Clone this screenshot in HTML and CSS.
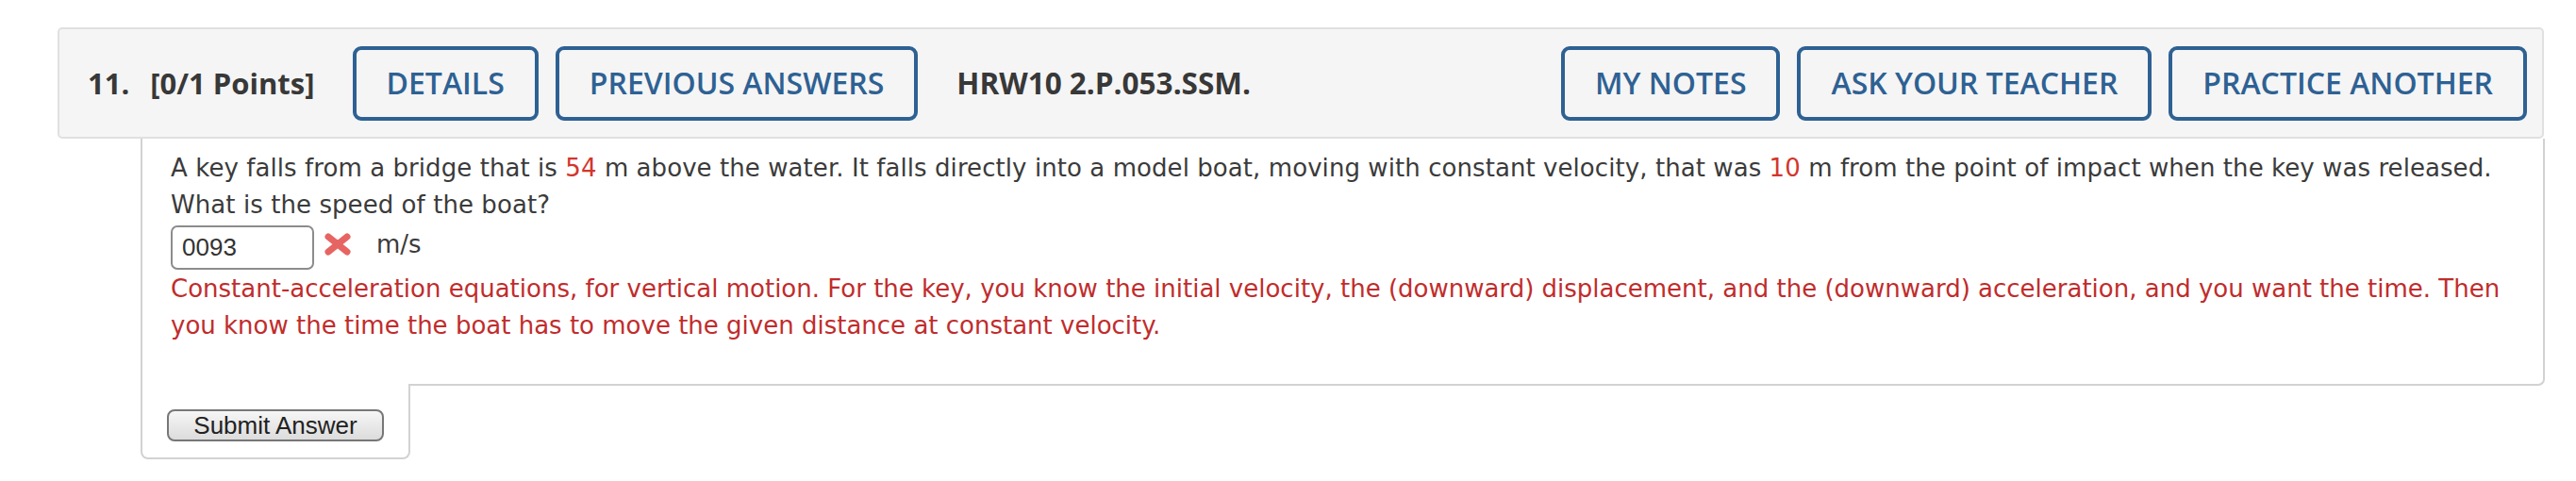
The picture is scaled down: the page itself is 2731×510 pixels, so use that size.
FILE: index.html
```html
<!DOCTYPE html>
<html lang="en">
<head>
<meta charset="utf-8">
<title>Question 11</title>
<link rel="stylesheet" href="styles.css">
</head>
<body>
<div class="page">
  <div class="question">
    <div class="qheader">
      <span class="qnum">11.</span>
      <span class="qpts">[0/1 Points]</span>
      <div class="hgroup">
        <button class="hbtn">DETAILS</button>
        <button class="hbtn">PREVIOUS ANSWERS</button>
      </div>
      <span class="qcode">HRW10 2.P.053.SSM.</span>
      <div class="hgroup hright">
        <button class="hbtn">MY NOTES</button>
        <button class="hbtn">ASK YOUR TEACHER</button>
        <button class="hbtn">PRACTICE ANOTHER</button>
      </div>
    </div>
    <div class="qbody">
      <p class="qtext"><span>A key falls from a bridge that is </span><span class="num">54</span><span> m above the water. It falls directly into a model boat, moving with constant velocity, that was </span><span class="num">10</span><span> m from the point of impact when the key was released. </span><span>What is the speed of the boat?</span></p>
      <div class="answer-row">
        <input class="answer" type="text" value="0093">
        <svg class="wrong" width="30" height="24" viewBox="0 0 30 24" aria-hidden="true">
          <path d="M5 4 L25 20 M25 4 L5 20" stroke="#e66563" stroke-width="7" stroke-linecap="round" fill="none"/>
        </svg>
        <span class="unit">m/s</span>
      </div>
      <p class="hint">Constant-acceleration equations, for vertical motion. For the key, you know the initial velocity, the (downward) displacement, and the (downward) acceleration, and you want the time. Then you know the time the boat has to move the given distance at constant velocity.</p>
    </div>
    <div class="submit-tab">
      <button class="submit">Submit Answer</button>
    </div>
  </div>
</div>
</body>
</html>
```

FILE: styles.css
```css
html, body {
  margin: 0;
  padding: 0;
  background: #ffffff;
}

.page {
  padding: 29px 34px 0 61px;
}

.qheader {
  display: flex;
  align-items: center;
  height: 114px;
  padding: 0 16px 0 30px;
  background: #f5f5f5;
  border: 2px solid #e0e0e0;
  border-radius: 5px;
  font-family: "Open Sans", "Liberation Sans", sans-serif;
  color: #383838;
}

.qnum,
.qpts,
.qcode {
  font-weight: 700;
  font-size: 31px;
  line-height: 40px;
  white-space: nowrap;
}

.qnum {
  margin-right: 22px;
}

.qpts {
  margin-right: 40px;
}

.qcode {
  margin-left: 41px;
  font-size: 31.5px;
}

.hgroup {
  display: flex;
  gap: 18px;
}

.hright {
  margin-left: auto;
}

.hbtn {
  height: 79px;
  padding: 0 32px;
  background: transparent;
  border: 4px solid #2e6193;
  border-radius: 9px;
  color: #2e6193;
  font-family: "Open Sans", "Liberation Sans", sans-serif;
  font-weight: 600;
  font-size: 32px;
  line-height: 40px;
  white-space: nowrap;
}

.qbody {
  margin: 0 -1px 0 88px;
  padding: 12px 16px 42px 30px;
  border: 2px solid #d2d2d2;
  border-top: none;
  border-radius: 0 0 7px 0;
  font-family: "DejaVu Sans", Verdana, sans-serif;
  font-size: 26px;
  line-height: 39px;
  color: #3b3b3b;
}

.qtext,
.hint {
  margin: 0;
}

.qtext {
  letter-spacing: 0.07px;
}

.num {
  color: #d3352e;
}

.answer-row {
  display: flex;
  align-items: center;
  margin: 2px 0 1px;
  height: 47px;
}

.answer {
  box-sizing: border-box;
  width: 152px;
  height: 47px;
  padding: 0 10px;
  border: 2px solid #8c8c8c;
  border-radius: 7px;
  font-family: "Liberation Sans", Arial, sans-serif;
  font-size: 26px;
  color: #333333;
  background: #ffffff;
}

.wrong {
  margin: 0 26px 0 10px;
  position: relative;
  top: -4px;
}

.unit {
  position: relative;
  top: -3px;
}

.hint {
  color: #c12c2c;
}

.submit-tab {
  position: relative;
  width: 282px;
  margin: -2px 0 0 88px;
  padding: 27px 0 17px 0;
  background: #ffffff;
  border: 2px solid #d2d2d2;
  border-top: none;
  border-radius: 0 0 8px 8px;
}

.submit {
  box-sizing: border-box;
  width: 230px;
  height: 34px;
  margin-left: 26px;
  padding: 0;
  border: 2px solid #777777;
  border-radius: 8px;
  background: linear-gradient(#f6f6f6, #dcdcdc);
  font-family: "Liberation Sans", Arial, sans-serif;
  font-size: 26px;
  line-height: 28px;
  color: #222222;
  display: block;
}
```
